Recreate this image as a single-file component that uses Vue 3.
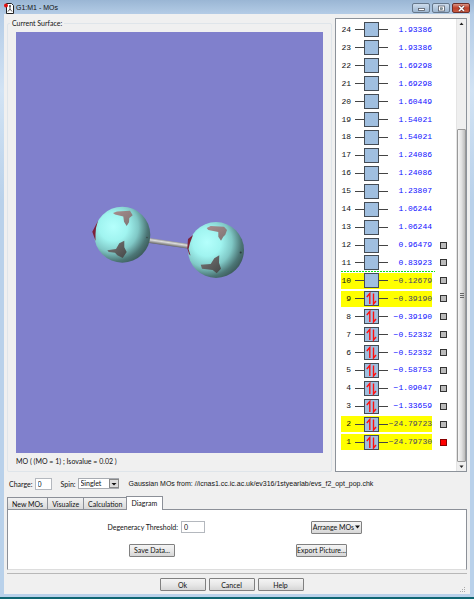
<script setup>
import { ref } from 'vue'

const energies = [
  '1.93386', '1.93386', '1.69298', '1.69298', '1.60449', '1.54021', '1.54021', '1.24086',
  '1.24086', '1.23807', '1.06244', '1.06244', '0.96479', '0.83923', '-0.12679', '-0.39190',
  '-0.39190', '-0.52332', '-0.52332', '-0.58753', '-1.09047', '-1.33659', '-24.79723', '-24.79730',
]
const highlighted = [10, 9, 2, 1]
const orbitals = energies.map((energy, i) => {
  const n = 24 - i
  return {
    n,
    energy: energy.replace('-', '−'),
    occupied: n <= 9,
    lit: highlighted.includes(n),
    marked: n <= 12,
    current: n === 1,
    lumo: n === 10,
  }
})

const tabs = ['New MOs', 'Visualize', 'Calculation', 'Diagram']
const active = ref('Diagram')
const charge = ref('0')
const spin = ref('Singlet')
const threshold = ref('0')
</script>

<template>
  <div class="window">
    <header class="titlebar">
      <svg class="app-icon" width="11" height="12" viewBox="0 0 11 12">
        <path d="M2.500 1.500h5l2 2v8h-7z" fill="#fff" stroke="#222" />
        <path d="M4 9.500l2-2.500 2 2.500M6 7V4.500" fill="none" stroke="#555" />
        <circle cx="2" cy="3.500" r="2" fill="#e01010" />
        <circle cx="6" cy="4" r="1" fill="#444" />
      </svg>
      <h1 class="title">G1:M1 - MOs</h1>
      <div class="win-buttons">
        <button class="win" aria-label="Minimize">
          <svg width="9" height="7" viewBox="0 0 9 7"><rect x="1.500" y="3.500" width="6" height="2" fill="#fff" stroke="#555b66" stroke-width=".8" /></svg>
        </button>
        <button class="win" aria-label="Maximize">
          <svg width="9" height="7" viewBox="0 0 9 7"><rect x="1.500" y="1" width="6" height="5" fill="#fff" stroke="#555b66" stroke-width=".8" /><rect x="3.500" y="2.800" width="2" height="1.500" fill="#8aa" stroke="#555b66" stroke-width=".6" /></svg>
        </button>
        <button class="win close" aria-label="Close">
          <svg width="9" height="7" viewBox="0 0 9 7"><path d="M2 1l5 5M7 1L2 6" stroke="#5a3030" stroke-width="2.600" /><path d="M2 1l5 5M7 1L2 6" stroke="#fff" stroke-width="1.600" /></svg>
        </button>
      </div>
    </header>

    <main class="client">
      <div class="viewer">
        <fieldset class="surface-group">
          <legend>Current Surface:</legend>
          <svg class="surface" viewBox="0 0 307 421" preserveAspectRatio="xMidYMid slice">
            <defs>
              <radialGradient id="ball" cx=".34" cy=".36" r=".72">
                <stop offset="0" stop-color="#b4fffc" />
                <stop offset=".35" stop-color="#a0f4f0" />
                <stop offset=".62" stop-color="#80c8c6" />
                <stop offset=".85" stop-color="#4c7676" />
                <stop offset="1" stop-color="#3b5959" />
              </radialGradient>
              <linearGradient id="bond" x1="0" y1="0" x2="0" y2="1">
                <stop offset="0" stop-color="#999" />
                <stop offset=".35" stop-color="#ddd" />
                <stop offset="1" stop-color="#666" />
              </linearGradient>
              <linearGradient id="patch" x1="0" y1="0" x2="1" y2="1">
                <stop offset="0" stop-color="#a88c8c" />
                <stop offset="1" stop-color="#7c7474" />
              </linearGradient>
              <linearGradient id="patch-dark" x1="0" y1="0" x2="1" y2="1">
                <stop offset="0" stop-color="#7c7878" />
                <stop offset="1" stop-color="#444848" />
              </linearGradient>
            </defs>
            <rect x="-100" y="-100" width="507" height="621" fill="#8080cc" />
            <g transform="translate(134 207) rotate(8.500)">
              <rect x="-2" y="-1" width="42" height="5" fill="url(#bond)" />
            </g>
            <circle cx="106.300" cy="202.700" r="28" fill="url(#ball)" />
            <circle cx="200" cy="218" r="28" fill="url(#ball)" />
            <path d="M76.300 199.700L82 188.700 80 196 79.500 202 79.500 209z" fill="#7c2038" />
            <path d="M171.300 216.300L172 207 177 203 174 211 172.500 217 174.500 223.500 173 222z" fill="#7c2038" />
            <path d="M97 181L101 179.500 114 178.700 116.700 183.300 113.300 186 113 190.300 110.700 194 108 189.700 107.300 184.500 99 182.500z" fill="url(#patch)" />
            <path d="M91.300 218.300L100 217 103.300 211.300 108.300 208.700 108.300 215.300 110.700 220 106.700 226 101.300 223.300 99 220.700 92.700 220z" fill="url(#patch-dark)" />
            <path d="M190.700 196L194.700 194 208 194.700 211 198 209.300 202.700 207.300 204.700 205 208.700 202.300 204.700 202.300 200 192.300 198z" fill="url(#patch)" />
            <path d="M184.700 232.700L194.700 232 198.300 226.300 203.300 223.300 203 230.700 205 236.700 200.700 241.300 196.700 238 186 236.700z" fill="url(#patch-dark)" />
            <circle cx="131" cy="205.500" r=".8" fill="#384848" />
            <circle cx="224.700" cy="220.500" r="1" fill="#2c3c3c" />
          </svg>
          <p class="caption">MO ( (MO = 1) ; Isovalue = 0.02 )</p>
        </fieldset>

        <section class="levels">
          <ul class="rows">
            <li v-for="o in orbitals" :key="o.n" class="row" :class="{ lumo: o.lumo }">
              <div class="level" :class="{ lit: o.lit }">
                <span class="num">{{ o.n }}</span>
                <svg class="orbital" width="33" height="15" viewBox="0 0 33 15">
                  <path d="M0 7.500h33" stroke="#444" />
                  <rect x="9.500" y=".5" width="14" height="14" fill="#a0bfe0" stroke="#444c55" />
                  <path v-if="o.occupied" d="M14.800 13V2.500l-3 3.500M18.500 2.500v10.500l2.500-3" stroke="#ff1010" stroke-width="1.400" fill="none" />
                </svg>
                <span class="energy">{{ o.energy }}</span>
              </div>
              <span class="mark" :class="{ shown: o.marked, current: o.current }"></span>
            </li>
          </ul>
          <div class="scrollbar">
            <svg width="9" height="9" viewBox="0 0 9 9"><path d="M2.500 6L4.500 3.500 6.500 6z" fill="#222" /></svg>
            <div class="track"><div class="thumb"><i></i><i></i><i></i></div></div>
            <svg width="9" height="9" viewBox="0 0 9 9"><path d="M2.500 3.500L4.500 6 6.500 3.500z" fill="#222" /></svg>
          </div>
        </section>
      </div>

      <div class="settings">
        <label for="charge">Charge:</label>
        <input id="charge" v-model="charge" class="charge" type="text" />
        <label for="spin" class="spin-label">Spin:</label>
        <span class="select">
          <select id="spin" v-model="spin"><option>Singlet</option><option>Triplet</option></select>
          <svg class="drop" width="10" height="9" viewBox="0 0 10 9"><rect x=".5" y=".5" width="9" height="8" fill="#ddd" stroke="#888" /><path d="M2.500 4h5L5 6.500z" fill="#111" /></svg>
        </span>
        <p class="source"><span>Gaussian MOs from:</span><span>//icnas1.cc.ic.ac.uk/ev316/1styearlab/evs_f2_opt_pop.chk</span></p>
      </div>

      <div class="tabs" role="tablist">
        <button v-for="t in tabs" :key="t" class="tab" role="tab" :class="{ active: t === active }" :aria-selected="t === active" @click="active = t">{{ t }}</button>
      </div>
      <section class="panel">
        <div class="field">
          <label for="threshold">Degeneracy Threshold:</label>
          <input id="threshold" v-model="threshold" type="text" />
        </div>
        <button class="btn arrange">Arrange MOs
          <svg width="5" height="4" viewBox="0 0 5 4"><path d="M0 .5h5L2.500 3.500z" fill="#111" /></svg>
        </button>
        <button class="btn save">Save Data...</button>
        <button class="btn export">Export Picture...</button>
      </section>

      <footer class="actions">
        <button class="btn">Ok</button>
        <button class="btn">Cancel</button>
        <button class="btn">Help</button>
        <svg class="grip" width="6" height="6" viewBox="0 0 6 6"><path d="M4 0h1v1h-1zM2 2h1v1h-1zM4 2h1v1h-1zM0 4h1v1h-1zM2 4h1v1h-1zM4 4h1v1h-1z" fill="#aaa" /></svg>
      </footer>
    </main>
  </div>
</template>

<style>
body { margin: 0; }
</style>

<style scoped>
* { box-sizing: border-box; margin: 0; padding: 0; }
.window {
  display: flex;
  flex-direction: column;
  min-height: 100vh;
  padding: 0 4px 3px;
  background: linear-gradient(#9ab6d4, #b4cce6 14px, #d2e3f4 90px, #b9d1ea 200px);
  border-bottom: 2px solid #0f6672;
  color: #111;
  font: 7px/10px Lato, "Liberation Sans", Arial, sans-serif;
  white-space: nowrap;
}
button, input, select { font: inherit; color: inherit; }
.titlebar { display: flex; align-items: center; height: 14px; }
.app-icon { margin-top: 1px; }
.title { flex: 1; padding: 2px 0 0 1px; font: 7px/10px "Liberation Sans", Arial, sans-serif; color: #111; }
.win-buttons { display: flex; gap: 2px; padding-top: 2px; }
.win {
  display: flex;
  align-items: center;
  justify-content: center;
  width: 18px;
  height: 10px;
  border: 1px solid #66788c;
  border-radius: 2px;
  background: linear-gradient(#cddcec, #9db6d0);
}
.win.close { border-color: #6b2f2a; background: linear-gradient(#dc9484, #bf3f28 50%, #c65a42); }
.client {
  flex: 1;
  display: flex;
  flex-direction: column;
  padding: 4px 3px 0;
  background: #f0f0f0;
}
.viewer { flex: 1; display: flex; gap: 3px; }
.surface-group {
  position: relative;
  flex: 1;
  display: flex;
  flex-direction: column;
  margin-top: 5px;
  padding: 8px 8px 0;
  border: 1px solid #dfe5ea;
  border-radius: 2px;
}
.surface-group legend {
  position: absolute;
  top: -6px;
  left: 2px;
  padding: 0 2px;
  background: #f0f0f0;
}
.surface { flex: 1; display: block; width: 100%; min-height: 0; background: #8080cc; }
.caption { padding: 3px 0 5px; }
.levels {
  display: flex;
  width: 132px;
  border: 1px solid #8c929a;
  background: #fff;
}
.rows { flex: 1; display: flex; flex-direction: column; padding: 2px 0 20px 5px; list-style: none; }
.row { position: relative; flex: 1 0 16px; display: flex; align-items: center; gap: 8px; }
.row.lumo::before {
  content: "";
  position: absolute;
  top: -1px;
  left: 0;
  width: 94px;
  height: 1px;
  background: repeating-linear-gradient(90deg, #10e010 0 2px, #fff 2px 3px);
}
.level {
  display: flex;
  align-items: center;
  width: 91px;
  height: 16px;
  font: 8px/16px "Liberation Mono", "Courier New", monospace;
}
.lit { background: #ff0; }
.num { width: 10px; text-align: right; }
.orbital { flex: none; margin-left: 4px; }
.energy { flex: 1; display: flex; justify-content: flex-end; color: #1010ff; }
.lit .energy { color: #444468; }
.mark { width: 7px; height: 7px; }
.mark.shown { border: 1px solid #333; background: #bbb; }
.mark.current { border-color: #800; background: #f00; }
.scrollbar { display: flex; flex-direction: column; width: 10px; background: #efefef; border-left: 1px solid #e4e4e4; }
.track { flex: 1; padding-top: 101px; display: flex; }
.thumb {
  flex: 1;
  display: flex;
  flex-direction: column;
  align-items: center;
  justify-content: center;
  gap: 1px;
  border: 1px solid #999;
  border-radius: 1px;
  background: linear-gradient(90deg, #f6f6f6, #e2e2e2 50%, #bcbcbc);
}
.thumb i { width: 4px; height: 1px; background: #666; }
.settings { display: flex; align-items: center; padding: 5px 2px 0; height: 18px; }
input { height: 12px; padding: 0 2px; border: 1px solid #b4b8be; background: #fff; }
.charge { width: 17px; margin-left: 2px; }
.spin-label { margin-left: 9px; }
.select { position: relative; display: flex; margin-left: 2px; }
select { width: 41px; height: 11px; padding: 0 2px; border: 1px solid #a8acb2; border-radius: 0; background: #fff; appearance: none; line-height: 9px; }
.drop { position: absolute; right: 0; top: 1px; }
.source { display: flex; gap: 2px; margin-left: 10px; font: 7px/10px "Liberation Sans", Arial, sans-serif; }
.tabs { display: flex; align-items: flex-end; height: 19px; }
.tab {
  height: 12px;
  padding: 0 4px;
  border: 1px solid #8c9098;
  border-bottom: 0;
  border-right-width: 0;
  background: linear-gradient(#f2f2f2, #dadada);
}
.tab.active { position: relative; height: 14px; margin-bottom: -1px; padding: 0 5px 2px 4px; border-right-width: 1px; background: #fff; }
.panel {
  display: grid;
  grid-template-columns: 233px 1fr;
  grid-auto-rows: 12px;
  row-gap: 11px;
  align-items: center;
  padding: 11px 0 13px;
  border: 1px solid #8c9098;
  border-bottom-color: #ddd;
  background: #fff;
}
.field { display: flex; align-items: center; justify-content: flex-end; gap: 3px; padding-right: 36px; }
.field input { width: 24px; }
.btn {
  display: flex;
  align-items: center;
  justify-content: center;
  width: 46px;
  height: 13px;
  border: 1px solid #808080;
  border-radius: 1px;
  background: linear-gradient(#f4f4f4, #e8e8e8 50%, #d6d6d6);
}
.btn svg { flex: none; }
.arrange { width: 51px; gap: 1px; margin-left: 70px; }
.save { margin-left: 121px; }
.export { width: 51px; margin-left: 55px; }
.actions {
  position: relative;
  display: flex;
  justify-content: center;
  gap: 3px;
  margin-top: 3px;
  padding: 4px 11px 3px 0;
  border-top: 1px solid #b8b8b8;
}
.grip { position: absolute; right: 1px; bottom: 1px; }
</style>
